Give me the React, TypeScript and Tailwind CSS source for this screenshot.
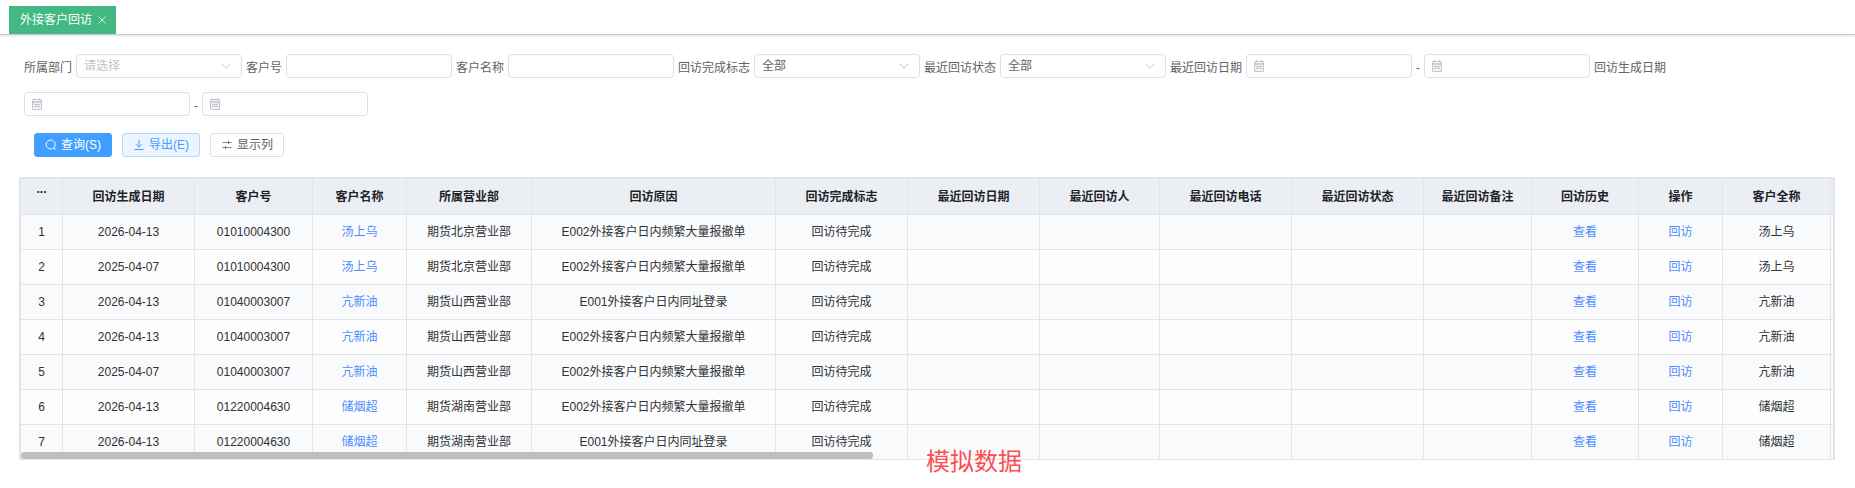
const columns = [
  { title: '...', width: 'w-[42px]' },
  { title: '回访生成日期', width: 'w-[132px]' },
  { title: '客户号', width: 'w-[118px]' },
  { title: '客户名称', width: 'w-[94px]' },
  { title: '所属营业部', width: 'w-[125px]' },
  { title: '回访原因', width: 'w-[244px]' },
  { title: '回访完成标志', width: 'w-[132px]' },
  { title: '最近回访日期', width: 'w-[132px]' },
  { title: '最近回访人', width: 'w-[120px]' },
  { title: '最近回访电话', width: 'w-[132px]' },
  { title: '最近回访状态', width: 'w-[132px]' },
  { title: '最近回访备注', width: 'w-[108px]' },
  { title: '回访历史', width: 'w-[107px]' },
  { title: '操作', width: 'w-[84px]' },
  { title: '客户全称', width: 'w-[108px]' },
  { title: '', width: 'w-[2px]' },
];

const E001 = 'E001外接客户日内同址登录';
const E002 = 'E002外接客户日内频繁大量报撤单';

const rows = [
  { date: '2026-04-13', no: '01010004300', name: '汤上乌', dept: '期货北京营业部', reason: E002 },
  { date: '2025-04-07', no: '01010004300', name: '汤上乌', dept: '期货北京营业部', reason: E002 },
  { date: '2026-04-13', no: '01040003007', name: '亢新油', dept: '期货山西营业部', reason: E001 },
  { date: '2026-04-13', no: '01040003007', name: '亢新油', dept: '期货山西营业部', reason: E002 },
  { date: '2025-04-07', no: '01040003007', name: '亢新油', dept: '期货山西营业部', reason: E002 },
  { date: '2026-04-13', no: '01220004630', name: '储烟超', dept: '期货湖南营业部', reason: E002 },
  { date: '2026-04-13', no: '01220004630', name: '储烟超', dept: '期货湖南营业部', reason: E001 },
];

const Chevron = () => (
  <svg width="10" height="6" viewBox="0 0 10 6" fill="none" stroke="#c0c4cc" strokeWidth="1">
    <path d="M0.5 0.5 L5 5.2 L9.5 0.5" />
  </svg>
);

const CalendarIcon = () => (
  <svg width="10" height="12" viewBox="0 0 10 12" fill="none" stroke="#c0c4cc" strokeWidth="1">
    <rect x="0.5" y="1.5" width="9" height="10" rx="0.5" fill="#f2f3f5" />
    <path d="M0.5 4 H9.5" strokeWidth="1.5" />
    <path d="M2.5 0 V2 M7.5 0 V2 M2 6.5 H8 M2 8.5 H8" />
  </svg>
);

const Label = ({ children }: { children: string }) => (
  <span className="h-6 pt-1 text-xs leading-5 text-[#606266]">{children}</span>
);

const SelectBox = ({ value, placeholder }: { value?: string; placeholder?: string }) => (
  <div className="flex h-6 w-[166px] items-center justify-between rounded border border-[#dcdfe6] bg-white pl-[7px] pr-[10px] text-xs">
    <span className={value ? 'text-[#606266]' : 'text-[#c0c4cc]'}>{value || placeholder}</span>
    <Chevron />
  </div>
);

const TextBox = () => <div className="h-6 w-[166px] rounded border border-[#dcdfe6] bg-white" />;

const DateBox = () => (
  <div className="flex h-6 w-[166px] items-center rounded border border-[#dcdfe6] bg-white pl-[7px]">
    <CalendarIcon />
  </div>
);

const App = () => {
  return (
    <div className="relative h-[488px] w-full overflow-hidden bg-white font-['Liberation_Sans','Noto_Sans_CJK_SC',sans-serif]">
      <div className="h-[35px] border-b border-[#c8c8c8] pl-[9px] pt-1.5 shadow-[0_1px_3px_rgba(0,0,0,0.12)]">
        <div className="flex h-7 w-[107px] items-center bg-[#42b983] pl-[11px] text-xs text-white">
          外接客户回访
          <svg className="ml-1.5" width="8" height="8" viewBox="0 0 8 8" stroke="white" strokeWidth="0.8">
            <path d="M0.5 0.5 L7.5 7.5 M7.5 0.5 L0.5 7.5" />
          </svg>
        </div>
      </div>

      <div className="flex flex-wrap gap-x-1 gap-y-3.5 pl-6 pr-6 pt-[19px]">
        <Label>所属部门</Label>
        <SelectBox placeholder="请选择" />
        <Label>客户号</Label>
        <TextBox />
        <Label>客户名称</Label>
        <TextBox />
        <Label>回访完成标志</Label>
        <SelectBox value="全部" />
        <Label>最近回访状态</Label>
        <SelectBox value="全部" />
        <Label>最近回访日期</Label>
        <DateBox />
        <Label>-</Label>
        <DateBox />
        <Label>回访生成日期</Label>
        <DateBox />
        <Label>-</Label>
        <DateBox />
      </div>

      <div className="mt-[17px] flex gap-2.5 pl-[34px] text-xs">
        <button className="flex h-6 w-[78px] items-center justify-center gap-1 rounded-[3px] border border-[#409eff] bg-[#409eff] text-white">
          <svg width="12" height="12" viewBox="0 0 12 12" fill="none" stroke="white" strokeWidth="1">
            <circle cx="5.7" cy="5.5" r="4.5" />
            <path d="M8.8 8.8 L10.6 10.8" />
          </svg>
          查询(S)
        </button>
        <button className="flex h-6 w-[78px] items-center justify-center gap-1 rounded-[3px] border border-[#b3d8ff] bg-[#ecf5ff] text-[#409eff]">
          <svg width="12" height="12" viewBox="0 0 12 12" fill="none" stroke="#409eff" strokeWidth="1">
            <path d="M6 1 V8 M3 5.2 L6 8.2 L9 5.2 M1.5 10.5 H10.5" />
          </svg>
          导出(E)
        </button>
        <button className="flex h-6 w-[74px] items-center justify-center gap-1 rounded-[3px] border border-[#dcdfe6] bg-white text-[#606266]">
          <svg width="12" height="12" viewBox="0 0 12 12" fill="none" stroke="#606266" strokeWidth="0.8">
            <path d="M1.5 3.5 H10.5 M1.5 8.5 H10.5 M7.5 1.8 V5.2 M4.5 6.8 V10.2" />
          </svg>
          显示列
        </button>
      </div>

      <div className="relative ml-[19px] mt-5 h-[283px] w-[1816px] overflow-hidden border-x-2 border-b border-t-2 border-[#e1e5ea]">
        <table className="w-[1812px] table-fixed border-separate border-spacing-0 text-center text-xs text-[#303133]">
          <colgroup>
            {columns.map((col, i) => (
              <col key={i} className={col.width} />
            ))}
          </colgroup>
          <thead>
            <tr className="h-9 bg-[#ebeff4] font-bold text-[#1f2329]">
              {columns.map((col, i) => (
                <th key={i} className="border-b border-r border-[#e1e5ea] p-0 last:border-r-0">
                  {i === 0 ? <span className="block pb-4 leading-3">{col.title}</span> : col.title}
                </th>
              ))}
            </tr>
          </thead>
          <tbody>
            {rows.map((row, i) => (
              <tr key={i} className={`h-[35px] ${i % 2 === 0 ? 'bg-[#f9fafc]' : 'bg-[#fdfdfe]'}`}>
                <td className="border-b border-r border-[#e1e5ea] p-0">{i + 1}</td>
                <td className="border-b border-r border-[#e1e5ea] p-0">{row.date}</td>
                <td className="border-b border-r border-[#e1e5ea] p-0">{row.no}</td>
                <td className="border-b border-r border-[#e1e5ea] p-0 text-[#4f8cff]">{row.name}</td>
                <td className="border-b border-r border-[#e1e5ea] p-0">{row.dept}</td>
                <td className="border-b border-r border-[#e1e5ea] p-0">{row.reason}</td>
                <td className="border-b border-r border-[#e1e5ea] p-0">回访待完成</td>
                <td className="border-b border-r border-[#e1e5ea] p-0" />
                <td className="border-b border-r border-[#e1e5ea] p-0" />
                <td className="border-b border-r border-[#e1e5ea] p-0" />
                <td className="border-b border-r border-[#e1e5ea] p-0" />
                <td className="border-b border-r border-[#e1e5ea] p-0" />
                <td className="border-b border-r border-[#e1e5ea] p-0 text-[#4f8cff]">查看</td>
                <td className="border-b border-r border-[#e1e5ea] p-0 text-[#4f8cff]">回访</td>
                <td className="border-b border-r border-[#e1e5ea] p-0">{row.name}</td>
                <td className="border-b border-[#e1e5ea] p-0" />
              </tr>
            ))}
          </tbody>
        </table>
        {/* horizontal scrollbar thumb */}
        <div className="absolute bottom-0 left-0 h-[7px] w-[852px] rounded-[3px] bg-[#bfbfbf]" />
      </div>

      <div className="absolute left-[926px] top-[447px] text-2xl leading-[30px] text-[#ff4d4f]">模拟数据</div>
    </div>
  );
};

export default App;
